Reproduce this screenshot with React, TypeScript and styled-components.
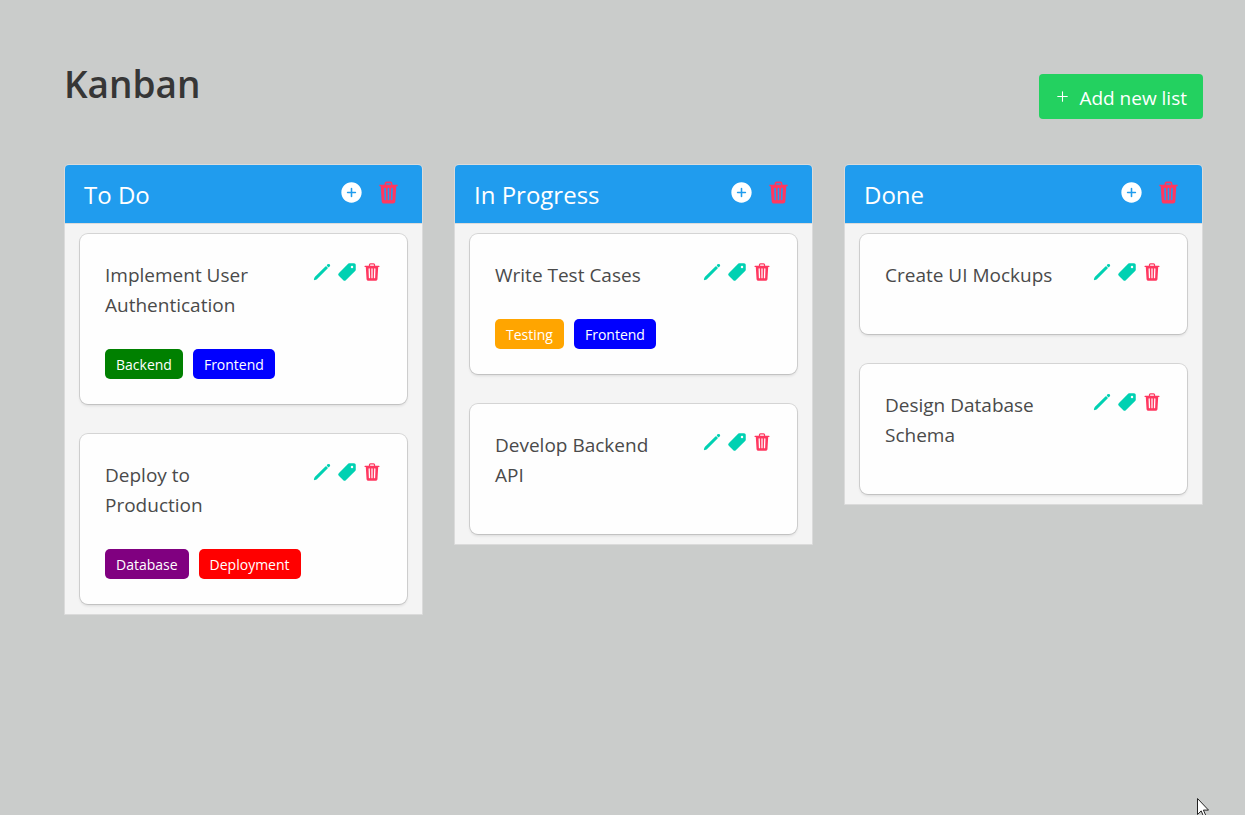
import React from 'react';
import styled, { createGlobalStyle } from 'styled-components';
import { IoAdd, IoAddCircle, IoPencil, IoPricetag, IoTrash } from 'react-icons/io5';

const GlobalStyle = createGlobalStyle`
  *, *::before, *::after { box-sizing: border-box; }
  body {
    margin: 0;
    background: #cacccb;
    color: #4a4a4a;
    font-family: 'Segoe UI', 'Open Sans', 'Noto Sans', sans-serif;
  }
  h1, h2, h3, ul { margin: 0; padding: 0; font-weight: 400; }
  ul { list-style: none; }
`;

const Page = styled.main`
  min-height: 100vh;
  padding: 60px 42px 60px 64px;
`;

const TopBar = styled.header`
  display: flex;
  justify-content: space-between;
  align-items: flex-start;
  height: 104px;
`;

const PageTitle = styled.h1`
  color: #363636;
  font-size: 37px;
  line-height: 48px;
  && { font-weight: 600; }
`;

const AddListButton = styled.button`
  display: flex;
  align-items: center;
  gap: 8px;
  height: 45px;
  margin-top: 14px;
  padding: 2px 16px 0 15px;
  border: 0;
  border-radius: 4px;
  background: #23d160;
  color: #fff;
  font-family: inherit;
  font-size: 19px;
  white-space: nowrap;
  cursor: pointer;
  svg { margin-bottom: 2px; }
`;

const Board = styled.div`
  display: grid;
  grid-template-columns: repeat(3, minmax(0, 1fr));
  align-items: start;
  gap: 31px;
`;

const Column = styled.section`
  border: 1px solid #dbdbdb;
  border-radius: 5px 5px 0 0;
  background: #f4f4f4;
  overflow: hidden;
`;

const ColumnHeader = styled.header`
  display: flex;
  justify-content: space-between;
  align-items: center;
  height: 59px;
  padding: 0 21px 0 19px;
  border-bottom: 1px solid #dbdbdb;
  background: #209cee;
`;

const ColumnTitle = styled.h2`
  padding-top: 2px;
  color: #fff;
  font-size: 24px;
  line-height: 36px;
`;

const ColumnActions = styled.div`
  display: flex;
  flex: none;
  gap: 12px;
  padding-bottom: 4px;
`;

const CardActions = styled.div`
  display: flex;
  flex: none;
  gap: 5px;
  padding-top: 3px;
`;

const IconButton = styled.button<{ $color: string }>`
  display: flex;
  padding: 0;
  border: 0;
  background: none;
  color: ${({ $color }) => $color};
  cursor: pointer;
`;

const CardList = styled.ul`
  display: grid;
  gap: 30px;
  padding: 10px 15px;
`;

const Card = styled.li`
  padding: 25px;
  border-radius: 8px;
  background: #fefefe;
  box-shadow: 0 2px 3px rgba(10, 10, 10, 0.1), 0 0 0 1px rgba(10, 10, 10, 0.13);
`;

const CardTop = styled.div`
  display: flex;
  justify-content: space-between;
  align-items: flex-start;
  gap: 25px;
  margin-bottom: 19px;
`;

const CardTitle = styled.h3`
  padding-top: 1px;
  font-size: 19px;
  line-height: 30px;
`;

const Tags = styled.ul`
  display: flex;
  flex-wrap: wrap;
  gap: 10px;
  padding-top: 10px;
`;

const Tag = styled.li<{ $color: string }>`
  height: 30px;
  padding: 1px 11px 0;
  border-radius: 5px;
  background: ${({ $color }) => $color};
  color: #fff;
  font-size: 14px;
  line-height: 29px;
`;

const Pointer = styled.svg`
  position: fixed;
  right: 36px;
  bottom: -2px;
  pointer-events: none;
`;

type Label = 'Backend' | 'Frontend' | 'Testing' | 'Database' | 'Deployment';

const labelColors: Record<Label, string> = {
  Backend: 'green',
  Frontend: 'blue',
  Testing: 'orange',
  Database: 'purple',
  Deployment: 'red',
};

const lists: { title: string; cards: { title: string; labels: Label[] }[] }[] = [
  {
    title: 'To Do',
    cards: [
      { title: 'Implement User Authentication', labels: ['Backend', 'Frontend'] },
      { title: 'Deploy to Production', labels: ['Database', 'Deployment'] },
    ],
  },
  {
    title: 'In Progress',
    cards: [
      { title: 'Write Test Cases', labels: ['Testing', 'Frontend'] },
      { title: 'Develop Backend API', labels: [] },
    ],
  },
  {
    title: 'Done',
    cards: [
      { title: 'Create UI Mockups', labels: [] },
      { title: 'Design Database Schema', labels: [] },
    ],
  },
];

const teal = '#00d1b2';
const red = '#ff3860';

export default function App() {
  return (
    <>
      <GlobalStyle />
      <Page>
        <TopBar>
          <PageTitle>Kanban</PageTitle>
          <AddListButton type="button">
            <IoAdd size={17} />
            Add new list
          </AddListButton>
        </TopBar>
        <Board>
          {lists.map((list) => (
            <Column key={list.title}>
              <ColumnHeader>
                <ColumnTitle>{list.title}</ColumnTitle>
                <ColumnActions>
                  <IconButton type="button" $color="#fff" aria-label="Add card">
                    <IoAddCircle size={25} />
                  </IconButton>
                  <IconButton type="button" $color={red} aria-label="Delete list">
                    <IoTrash size={25} />
                  </IconButton>
                </ColumnActions>
              </ColumnHeader>
              <CardList>
                {list.cards.map((card) => (
                  <Card key={card.title}>
                    <CardTop>
                      <CardTitle>{card.title}</CardTitle>
                      <CardActions>
                        <IconButton type="button" $color={teal} aria-label="Edit card">
                          <IoPencil size={20} />
                        </IconButton>
                        <IconButton type="button" $color={teal} aria-label="Edit labels">
                          <IoPricetag size={20} />
                        </IconButton>
                        <IconButton type="button" $color={red} aria-label="Delete card">
                          <IoTrash size={20} />
                        </IconButton>
                      </CardActions>
                    </CardTop>
                    {card.labels.length > 0 && (
                      <Tags>
                        {card.labels.map((label) => (
                          <Tag key={label} $color={labelColors[label]}>
                            {label}
                          </Tag>
                        ))}
                      </Tags>
                    )}
                  </Card>
                ))}
              </CardList>
            </Column>
          ))}
        </Board>
      </Page>
      <Pointer width="12" height="19" viewBox="0 0 12 19" aria-hidden="true">
        <path
          d="M.5.5v16l3.7-3.6 2.4 5.6 2.2-1-2.4-5.4h5.1z"
          fill="#fff"
          stroke="#222"
        />
      </Pointer>
    </>
  );
}
